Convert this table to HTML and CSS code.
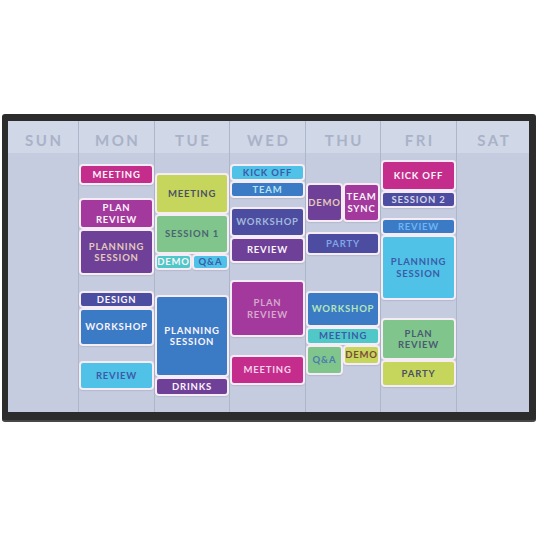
FILE: index.html
```html
<!DOCTYPE html>
<html>
<head>
<meta charset="utf-8">
<link rel="stylesheet" href="styles.css">
</head>
<body>
<div class="tv">
  <div class="screen">
    <div class="col">
      <div class="day">SUN</div>
      <div class="lane"></div>
    </div>
    <div class="col">
      <div class="day">MON</div>
      <div class="lane">
        <div class="ev magenta t-white" style="margin-top:11px;height:21px">MEETING</div>
        <div class="ev plum t-white" style="margin-top:13px;height:31px">PLAN<br>REVIEW</div>
        <div class="ev purple t-beige" style="height:46px">PLANNING<br>SESSION</div>
        <div class="ev indigo t-white" style="margin-top:16px;height:17px">DESIGN</div>
        <div class="ev blue t-white" style="height:38px">WORKSHOP</div>
        <div class="ev cyan t-navy" style="margin-top:15px;height:29px">REVIEW</div>
      </div>
    </div>
    <div class="col">
      <div class="day">TUE</div>
      <div class="lane">
        <div class="ev lime t-dark" style="margin-top:20px;height:41px">MEETING</div>
        <div class="ev green t-slate" style="height:40px">SESSION 1</div>
        <div class="pair">
          <div class="ev teal t-white" style="height:16px">DEMO</div>
          <div class="ev cyan t-navy" style="height:16px">Q&amp;A</div>
        </div>
        <div class="ev blue t-white" style="margin-top:25px;height:82px">PLANNING<br>SESSION</div>
        <div class="ev purple t-white" style="height:19px">DRINKS</div>
      </div>
    </div>
    <div class="col">
      <div class="day">WED</div>
      <div class="lane">
        <div class="ev cyan t-navy" style="margin-top:11px;height:17px">KICK OFF</div>
        <div class="ev blue t-ice" style="height:17px">TEAM</div>
        <div class="ev indigo t-mist" style="margin-top:9px;height:30px">WORKSHOP</div>
        <div class="ev purple t-white" style="height:26px">REVIEW</div>
        <div class="ev plum t-rose" style="margin-top:17px;height:57px">PLAN<br>REVIEW</div>
        <div class="ev magenta t-blush" style="margin-top:18px;height:30px">MEETING</div>
      </div>
    </div>
    <div class="col">
      <div class="day">THU</div>
      <div class="lane">
        <div class="pair" style="margin-top:30px">
          <div class="ev purple t-beige" style="height:39px">DEMO</div>
          <div class="ev plum t-white" style="height:39px">TEAM<br>SYNC</div>
        </div>
        <div class="ev indigo t-sky" style="margin-top:10px;height:23px">PARTY</div>
        <div class="ev blue t-mint" style="margin-top:36px;height:36px">WORKSHOP</div>
        <div class="ev teal t-navy" style="height:18px">MEETING</div>
        <div class="pair">
          <div class="ev green t-steel" style="height:30px">Q&amp;A</div>
          <div class="ev lime t-brown" style="height:20px">DEMO</div>
        </div>
      </div>
    </div>
    <div class="col">
      <div class="day">FRI</div>
      <div class="lane">
        <div class="ev magenta t-white" style="margin-top:7px;height:31px">KICK OFF</div>
        <div class="ev indigo t-pale" style="height:17px">SESSION 2</div>
        <div class="ev blue t-azure" style="margin-top:10px;height:17px">REVIEW</div>
        <div class="ev cyan t-navy" style="height:65px">PLANNING<br>SESSION</div>
        <div class="ev green t-slate2" style="margin-top:18px;height:42px">PLAN<br>REVIEW</div>
        <div class="ev lime t-dark" style="height:27px">PARTY</div>
      </div>
    </div>
    <div class="col">
      <div class="day">SAT</div>
      <div class="lane"></div>
    </div>
  </div>
</div>
</body>
</html>
```

FILE: styles.css
```css
* { box-sizing: border-box; }
html, body { margin: 0; padding: 0; background: #ffffff; }
body { font-family: "Lato", "Noto Sans", sans-serif; }

.tv {
  margin: 114px 0 0 2px;
  width: 534px;
  height: 308px;
  padding: 7px 7px 10px 6px;
  background: #2c2c2c;
  border-radius: 3px;
  border-bottom: 2px solid #474747;
}

.screen {
  display: grid;
  grid-template-columns: 71px 76px 75px 76px 75px 76px 72px;
  height: 291px;
  background: #c5ccdf;
}

.col {
  display: flex;
  flex-direction: column;
  border-right: 1px solid #aeb6c9;
  min-width: 0;
}
.col:last-child { border-right: none; }

.day {
  height: 32px;
  padding-top: 5px;
  display: flex;
  align-items: center;
  justify-content: center;
  background: #d0d7e7;
  color: #a9b2c7;
  font-weight: 700;
  font-size: 15px;
  letter-spacing: 2.5px;
  text-indent: 2.5px;
}

.lane {
  flex: 1;
  display: flex;
  flex-direction: column;
}

.pair {
  display: flex;
  align-items: flex-start;
}
.pair .ev { flex: 1; min-width: 0; }

.ev {
  display: flex;
  align-items: center;
  justify-content: center;
  text-align: center;
  border: 2px solid #f6ecf5;
  border-radius: 4px;
  font-weight: 700;
  font-size: 9.5px;
  line-height: 11.5px;
  letter-spacing: 0.8px;
  white-space: nowrap;
  box-shadow: 0 1px 1px rgba(60, 60, 90, 0.12);
}

/* fills */
.magenta { background: #c52d8c; }
.plum { background: #a3399d; }
.purple { background: #6f4098; }
.indigo { background: #4c4ca0; }
.blue { background: #3b7bc6; }
.cyan { background: #50c2e7; }
.lime { background: #c6d55c; }
.green { background: #80c58c; }
.teal { background: #50c8c8; }

/* text colours */
.t-white { color: #fbf4fa; }
.t-beige { color: #e2cbba; }
.t-navy { color: #3b5ba7; }
.t-dark { color: #4b5264; }
.t-slate { color: #4b6472; }
.t-slate2 { color: #4b5b72; }
.t-ice { color: #b2e4f0; }
.t-mist { color: #a2b9da; }
.t-rose { color: #d6a7cc; }
.t-blush { color: #f5d3eb; }
.t-sky { color: #7fa6e6; }
.t-mint { color: #b6e5b9; }
.t-steel { color: #4a7ab0; }
.t-brown { color: #7a4b3b; }
.t-pale { color: #d5d5e5; }
.t-azure { color: #6db5f3; }
```
